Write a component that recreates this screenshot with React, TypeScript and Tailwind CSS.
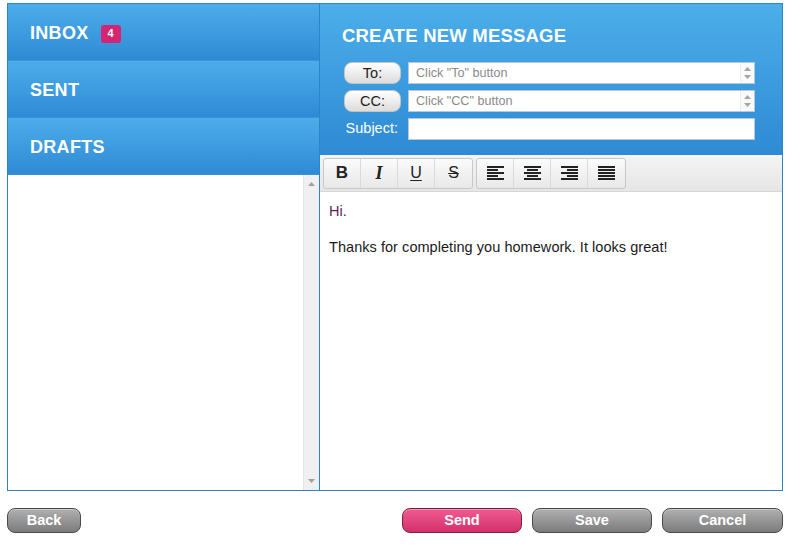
import React from "react";

/**
 * Compose Message screen
 * Left: folder navigation, right: message composer with toolbar.
 */

const navItems = [
  { id: "inbox", label: "INBOX", badge: 4 },
  { id: "sent", label: "SENT" },
  { id: "drafts", label: "DRAFTS" },
];

function Spinner() {
  return (
    <div className="flex flex-col items-center justify-center gap-[4px] w-[14px] h-full border-l border-[#ececec] bg-[#fafafa]">
      <svg width="7" height="4" viewBox="0 0 7 4">
        <path d="M0 4 L3.5 0 L7 4 Z" fill="#a4a4a4" />
      </svg>
      <svg width="7" height="4" viewBox="0 0 7 4">
        <path d="M0 0 L3.5 4 L7 0 Z" fill="#a4a4a4" />
      </svg>
    </div>
  );
}

function AlignIcon({ mode }: { mode: "left" | "center" | "right" | "justify" }) {
  // five lines, alternating long / short
  const rows = [0, 3, 6, 9, 12];
  return (
    <svg width="17" height="14" viewBox="0 0 17 14">
      {rows.map((y, i) => {
        const long = i % 2 === 0 || mode === "justify";
        const w = long ? 17 : 11;
        let x = 0;
        if (mode === "center") x = (17 - w) / 2;
        if (mode === "right") x = 17 - w;
        return <rect key={y} x={x} y={y} width={w} height="2" fill="#222" />;
      })}
    </svg>
  );
}

function ToolButton({ children, last }: { children: React.ReactNode; last?: boolean }) {
  return (
    <div
      className={`w-[37px] h-full flex items-center justify-center ${
        last ? "" : "border-r border-[#dadada]"
      }`}
    >
      {children}
    </div>
  );
}

function BottomButton({ label, variant, width }: { label: string; variant: "gray" | "pink"; width: string }) {
  const colors =
    variant === "pink"
      ? "bg-gradient-to-b from-[#f15a92] to-[#d22f6b] border-[#7d1d40]"
      : "bg-gradient-to-b from-[#b0b0b0] to-[#7c7c7c] border-[#4a4a4a]";
  return (
    <button
      className={`${width} h-[25px] rounded-[8px] border ${colors} text-white font-bold text-[14.5px] leading-none shadow-[inset_0_1px_0_rgba(255,255,255,0.35)]`}
    >
      {label}
    </button>
  );
}

export default function App() {
  return (
    <div className="w-[790px] h-[550px] bg-white pt-[3px] px-[7px] font-['Liberation_Sans',Arial,sans-serif]">
      {/* ====================================================================== */}
      {/* MAIN FRAME */}
      {/* ====================================================================== */}
      <div className="flex h-[488px] w-[776px] border border-[#2b86c6]">
        {/* Left navigation */}
        <aside className="w-[312px] flex flex-col border-r border-[#2b86c6]">
          {navItems.map((item) => (
            <div
              key={item.id}
              className="h-[57px] flex items-center pl-[22px] pt-[3px] bg-gradient-to-b from-[#4cadea] to-[#2f8ad5] border-b border-[#3a93d8]"
            >
              <span className="text-white font-bold text-[18px] tracking-[0.3px]">{item.label}</span>
              {item.badge !== undefined && (
                <span className="ml-[12px] w-[20px] h-[18px] rounded-[3px] bg-[#d32574] text-white text-[11px] font-bold flex items-center justify-center">
                  {item.badge}
                </span>
              )}
            </div>
          ))}
          <div className="flex-1 flex">
            <div className="flex-1" />
            <div className="w-[16px] bg-[#f0f0f0] border-l border-[#e4e4e4] flex flex-col justify-between items-center py-[7px]">
              <svg width="7" height="4" viewBox="0 0 7 4">
                <path d="M0 4 L3.5 0 L7 4 Z" fill="#a0a0a0" />
              </svg>
              <svg width="7" height="4" viewBox="0 0 7 4">
                <path d="M0 0 L3.5 4 L7 0 Z" fill="#a0a0a0" />
              </svg>
            </div>
          </div>
        </aside>

        {/* Composer */}
        <section className="flex-1 flex flex-col">
          <div className="h-[151px] bg-gradient-to-b from-[#4caeea] to-[#2e8ad4] pl-[24px] pr-[27px] pt-[21px]">
            <h1 className="text-white font-bold text-[18.5px] tracking-[0.2px] leading-[22px] ml-[-2px]">
              CREATE NEW MESSAGE
            </h1>
            <div className="mt-[15px] flex flex-col gap-[6px]">
              {["To", "CC"].map((f) => (
                <div key={f} className="flex items-center h-[22px] gap-[7px]">
                  <button className="w-[57px] h-[22px] rounded-[8px] bg-gradient-to-b from-white to-[#dcdcdc] border border-[#c4c4c4] text-[14.5px] text-[#222] leading-none">
                    {f}:
                  </button>
                  <div className="flex-1 h-[22px] bg-white border border-[#b9c8d6] flex items-center">
                    <span className="flex-1 pl-[7px] text-[12.6px] text-[#8a8a8a]">Click "{f}" button</span>
                    <Spinner />
                  </div>
                </div>
              ))}
              <div className="flex items-center h-[22px] gap-[7px]">
                <span className="w-[57px] text-right text-[14.5px] text-white pr-[3px]">Subject:</span>
                <div className="flex-1 h-[22px] bg-white border border-[#b9c8d6]" />
              </div>
            </div>
          </div>

          {/* Toolbar */}
          <div className="h-[37px] bg-gradient-to-b from-[#f4f4f4] to-[#e6e6e6] border-b border-[#d6d6d6] flex items-center pl-[3px] gap-[3px]">
            <div className="h-[31px] flex rounded-[3px] border border-[#c8c8c8] bg-gradient-to-b from-[#fbfbfb] to-[#e8e8e8]">
              <ToolButton>
                <span className="font-bold text-[17px] text-[#222]">B</span>
              </ToolButton>
              <ToolButton>
                <span className="font-['Liberation_Serif',serif] italic font-bold text-[18px] text-[#222]">I</span>
              </ToolButton>
              <ToolButton>
                <span className="text-[16px] text-[#222] underline underline-offset-2">U</span>
              </ToolButton>
              <ToolButton last>
                <span className="text-[16px] text-[#222] line-through">S</span>
              </ToolButton>
            </div>
            <div className="h-[31px] flex rounded-[3px] border border-[#c8c8c8] bg-gradient-to-b from-[#fbfbfb] to-[#e8e8e8]">
              <ToolButton>
                <AlignIcon mode="left" />
              </ToolButton>
              <ToolButton>
                <AlignIcon mode="center" />
              </ToolButton>
              <ToolButton>
                <AlignIcon mode="right" />
              </ToolButton>
              <ToolButton last>
                <AlignIcon mode="justify" />
              </ToolButton>
            </div>
          </div>

          {/* Message body */}
          <div className="flex-1 bg-white pl-[9px] pt-[10px] text-[14.5px] tracking-[0.05px] leading-[18px]">
            <p className="text-[#5b1f5b]">Hi.</p>
            <p className="mt-[18px] text-[#1a1a1a]">Thanks for completing you homework. It looks great!</p>
          </div>
        </section>
      </div>

      {/* ====================================================================== */}
      {/* ACTION BUTTONS */}
      {/* ====================================================================== */}
      <div className="mt-[17px] flex items-center">
        <BottomButton label="Back" variant="gray" width="w-[74px]" />
        <div className="flex-1" />
        <div className="flex gap-[10px]">
          <BottomButton label="Send" variant="pink" width="w-[120px]" />
          <BottomButton label="Save" variant="gray" width="w-[120px]" />
          <BottomButton label="Cancel" variant="gray" width="w-[121px]" />
        </div>
      </div>
    </div>
  );
}
